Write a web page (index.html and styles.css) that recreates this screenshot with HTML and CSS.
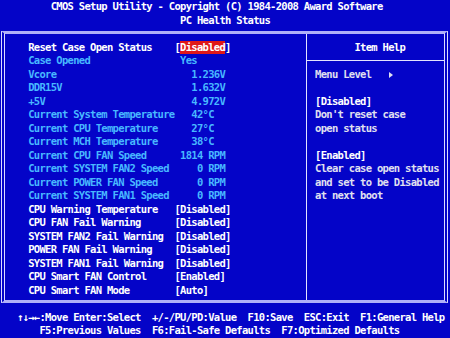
FILE: index.html
```html
<!DOCTYPE html>
<html lang="en">

<head>
    <meta charset="UTF-8">
    <meta name="viewport" content="width=device-width, initial-scale=1.0">
    <title>PC Health Status</title>
    <link rel="stylesheet" href="styles.css">
</head>

<body>
    <div class="screen">
        <header class="title">
            <div class="title-line main">CMOS Setup Utility - Copyright (C) 1984-2008 Award Software</div>
            <div class="title-line sub">PC Health Status</div>
        </header>

        <main class="frame">
            <section class="items">
                <div class="row"><span class="label">Reset Case Open Status</span><span class="value">[<span class="sel">Disabled</span>]</span></div>
                <div class="row info"><span class="label">Case Opened</span><span class="value"> Yes</span></div>
                <div class="row info"><span class="label">Vcore</span><span class="value">   1.236V</span></div>
                <div class="row info"><span class="label">DDR15V</span><span class="value">   1.632V</span></div>
                <div class="row info"><span class="label">+5V</span><span class="value">   4.972V</span></div>
                <div class="row info"><span class="label">Current System Temperature</span><span class="value">   42°C</span></div>
                <div class="row info"><span class="label">Current CPU Temperature</span><span class="value">   27°C</span></div>
                <div class="row info"><span class="label">Current MCH Temperature</span><span class="value">   38°C</span></div>
                <div class="row info"><span class="label">Current CPU FAN Speed</span><span class="value"> 1814 RPM</span></div>
                <div class="row info"><span class="label">Current SYSTEM FAN2 Speed</span><span class="value">    0 RPM</span></div>
                <div class="row info"><span class="label">Current POWER FAN Speed</span><span class="value">    0 RPM</span></div>
                <div class="row info"><span class="label">Current SYSTEM FAN1 Speed</span><span class="value">    0 RPM</span></div>
                <div class="row"><span class="label">CPU Warning Temperature</span><span class="value">[Disabled]</span></div>
                <div class="row"><span class="label">CPU FAN Fail Warning</span><span class="value">[Disabled]</span></div>
                <div class="row"><span class="label">SYSTEM FAN2 Fail Warning</span><span class="value">[Disabled]</span></div>
                <div class="row"><span class="label">POWER FAN Fail Warning</span><span class="value">[Disabled]</span></div>
                <div class="row"><span class="label">SYSTEM FAN1 Fail Warning</span><span class="value">[Disabled]</span></div>
                <div class="row"><span class="label">CPU Smart FAN Control</span><span class="value">[Enabled]</span></div>
                <div class="row"><span class="label">CPU Smart FAN Mode</span><span class="value">[Auto]</span></div>
            </section>

            <aside class="help">
                <div class="help-title">Item Help</div>
                <div class="help-body">
                    <div class="line">Menu Level   <span class="arrow"></span></div>
                    <div class="line"> </div>
                    <div class="line strong">[Disabled]</div>
                    <div class="line">Don't reset case</div>
                    <div class="line">open status</div>
                    <div class="line"> </div>
                    <div class="line strong">[Enabled]</div>
                    <div class="line">Clear case open status</div>
                    <div class="line">and set to be Disabled</div>
                    <div class="line">at next boot</div>
                </div>
            </aside>
        </main>

        <footer class="keys">
            <div class="key-line">   ↑↓→←:Move Enter:Select  +/-/PU/PD:Value  F10:Save  ESC:Exit  F1:General Help</div>
            <div class="key-line">       F5:Previous Values  F6:Fail-Safe Defaults  F7:Optimized Defaults</div>
        </footer>
    </div>
</body>

</html>
```

FILE: styles.css
```css
/* 80x25 text screen scaled to 450x338: one cell is 5.625 x 13.52 */
:root {
    --col: 5.625px;
    --row: 13.52px;
    --bios-blue: #0404c8;
}

html,
body {
    margin: 0;
    padding: 0;
    background: var(--bios-blue);
}

.screen {
    width: 450px;
    height: 338px;
    overflow: hidden;
    background: var(--bios-blue);
    color: #fff;
    font-family: "DejaVu Sans Mono", "Liberation Mono", monospace;
    font-size: 10.5px;
    font-weight: bold;
    letter-spacing: -0.696px;
    line-height: var(--row);
}

.title-line,
.label,
.value,
.help-title,
.help-body .line,
.key-line {
    white-space: pre;
}

.title-line {
    height: var(--row);
}

.title-line.main {
    padding-left: calc(var(--col) * 9);
}

.title-line.sub {
    padding-left: calc(var(--col) * 32);
}

.frame {
    display: flex;
    box-sizing: border-box;
    height: 272px;
    margin: 3.96px 2px 0 1px;
    border-top: 3px solid #b0b0f8;
    border-bottom: 3px solid #b0b0f8;
    border-left: 4px double #dcdcff;
    border-right: 4px double #dcdcff;
}

.items {
    flex: none;
    box-sizing: border-box;
    width: 302px;
    padding: 6.56px 0 0 23.125px;
    border-right: 1px solid #e4e4ff;
}

.row {
    display: flex;
    height: var(--row);
}

.label {
    width: calc(var(--col) * 26);
    flex: none;
}

.row.info {
    color: #48b8ff;
}

.sel {
    display: inline-block;
    background: #e01818;
    color: #fff;
}

.help {
    flex: 1;
    color: #e0e0f0;
}

.help-title {
    box-sizing: border-box;
    height: 27px;
    padding: 6.56px 0 0 47.4px;
    border-bottom: 1px solid #e4e4ff;
    color: #fff;
}

.help-body {
    padding: 6.6px 0 0 8px;
}

.help-body .line {
    height: var(--row);
}

.help-body .strong {
    color: #fff;
}

/* small solid triangle after "Menu Level" */
.arrow {
    display: inline-block;
    width: 0;
    height: 0;
    margin-left: 1px;
    border-left: 4px solid #e0e0f0;
    border-top: 3px solid transparent;
    border-bottom: 3px solid transparent;
    vertical-align: -0.5px;
}

.keys {
    margin-top: 7.96px;
}

.key-line {
    height: var(--row);
}
```
